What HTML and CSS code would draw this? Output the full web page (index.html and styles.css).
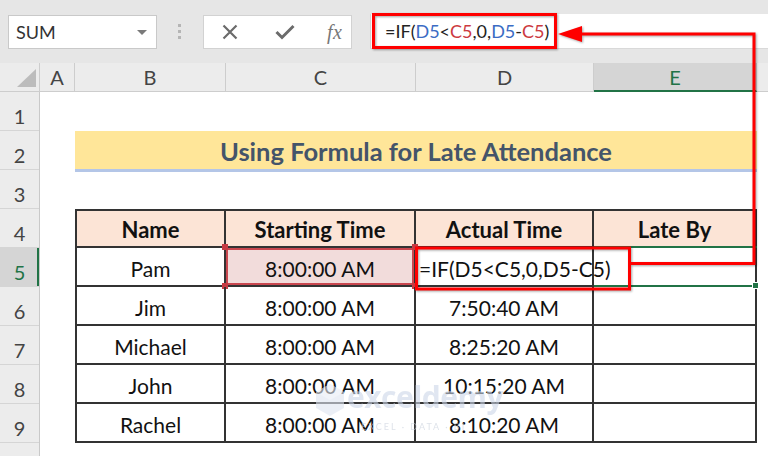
FILE: index.html
```html
<!DOCTYPE html>
<html>
<head>
<meta charset="utf-8">
<link rel="stylesheet" href="styles.css">
</head>
<body>
<div class="app">
  <div class="toolbar">
    <div class="namebox"><span>SUM</span><span class="caret"></span></div>
    <div class="grip"><i></i><i></i><i></i></div>
    <div class="fbtns">
      <svg class="ic" width="16" height="16" viewBox="0 0 16 16"><path d="M1.5 1.5 L14.5 14.5 M14.5 1.5 L1.5 14.5" stroke="#6b6b6b" stroke-width="2.2" fill="none"/></svg>
      <svg class="ic" width="20" height="16" viewBox="0 0 20 16"><path d="M1.5 8 L7 13.5 L18.5 2" stroke="#6b6b6b" stroke-width="3" fill="none"/></svg>
      <span class="fx">fx</span>
    </div>
    <div class="formula">=IF(<span class="r1">D5</span>&lt;<span class="r2">C5</span>,0,<span class="r1">D5</span>-<span class="r2">C5</span>)</div>
  </div>

  <div class="colheads">
    <div class="ch corner"><svg width="22" height="20" viewBox="0 0 22 20"><polygon points="21,1 21,19 2,19" fill="#bcbcbc"/></svg></div>
    <div class="ch ca">A</div>
    <div class="ch cb">B</div>
    <div class="ch cc">C</div>
    <div class="ch cd">D</div>
    <div class="ch ce active">E</div>
    <div class="ch cf"></div>
  </div>

  <div class="sheet">
    <div class="rowheads">
      <div class="rh">1</div>
      <div class="rh">2</div>
      <div class="rh">3</div>
      <div class="rh">4</div>
      <div class="rh active">5</div>
      <div class="rh">6</div>
      <div class="rh">7</div>
      <div class="rh">8</div>
      <div class="rh">9</div>
      <div class="rh"></div>
    </div>
    <div class="cells">
      <div class="blank"></div>
      <div class="titlerow"><div class="title">Using Formula for Late Attendance</div></div>
      <div class="blank"></div>
      <div class="tbl">
        <div class="td th">Name</div>
        <div class="td th">Starting Time</div>
        <div class="td th">Actual Time</div>
        <div class="td th">Late By</div>

        <div class="td">Pam</div>
        <div class="td sel">8:00:00 AM<i class="h h1"></i><i class="h h2"></i><i class="h h3"></i><i class="h h4"></i></div>
        <div class="td edit">=IF(D5&lt;C5,0,D5-C5)</div>
        <div class="td act"><i class="fill"></i></div>

        <div class="td">Jim</div>
        <div class="td">8:00:00 AM</div>
        <div class="td">7:50:40 AM</div>
        <div class="td"></div>

        <div class="td">Michael</div>
        <div class="td">8:00:00 AM</div>
        <div class="td">8:25:20 AM</div>
        <div class="td"></div>

        <div class="td">John</div>
        <div class="td">8:00:00 AM</div>
        <div class="td">10:15:20 AM</div>
        <div class="td"></div>

        <div class="td">Rachel</div>
        <div class="td">8:00:00 AM</div>
        <div class="td">8:10:20 AM</div>
        <div class="td"></div>
      </div>
    </div>
  </div>

  <div class="watermark">
    <svg class="cube" width="30" height="34" viewBox="0 0 30 34"><polygon points="15,1 29,9 29,25 15,33 1,25 1,9" fill="#dfe6f1"/><polygon points="15,1 29,9 15,17 1,9" fill="#e9eef6"/></svg>
    <div class="wm-text">
      <div class="wm-name">exceldemy</div>
      <div class="wm-sub">EXCEL · DATA · BI</div>
    </div>
  </div>

  <svg class="annot" width="768" height="456" viewBox="0 0 768 456">
    <g fill="none" stroke="#ff0000" stroke-width="3">
      <rect x="373.5" y="14.5" width="182" height="33"/>
      <polyline points="580,34 754,34 754,263.5 631,263.5"/>
      <rect x="416.5" y="248" width="213" height="41"/>
    </g>
    <polygon points="558,34 582,26 582,42" fill="#ff0000"/>
  </svg>
</div>
</body>
</html>
```

FILE: styles.css
```css
html, body {
  margin: 0;
  padding: 0;
}
body {
  font-family: Lato, "Liberation Sans", sans-serif;
  background: #ffffff;
}
.app {
  position: relative;
  width: 768px;
  height: 456px;
  overflow: hidden;
}

/* formula bar */
.toolbar {
  display: flex;
  align-items: flex-start;
  height: 63px;
  padding-top: 14px;
  box-sizing: border-box;
  background: #e6e6e6;
}
.namebox {
  margin-left: 8px;
  margin-top: 1px;
  width: 149px;
  height: 34px;
  box-sizing: border-box;
  background: #fff;
  border: 1px solid #c9c9c9;
  display: flex;
  align-items: center;
  justify-content: space-between;
  padding: 0 9px 0 7px;
  font-size: 18px;
  color: #333;
}
.caret {
  width: 0;
  height: 0;
  border-left: 5px solid transparent;
  border-right: 5px solid transparent;
  border-top: 5px solid #7a7a7a;
}
.grip {
  margin-left: 21px;
  margin-right: 21px;
  margin-top: 10px;
  width: 4px;
  display: flex;
  flex-direction: column;
  gap: 3px;
}
.grip i {
  display: block;
  width: 3px;
  height: 3px;
  background: #b5b5b5;
}
.fbtns {
  margin-top: 1px;
  width: 149px;
  height: 34px;
  box-sizing: border-box;
  background: #fff;
  border: 1px solid #d2d2d2;
  display: flex;
  align-items: center;
  padding-left: 18px;
}
.fbtns .ic {
  display: block;
}
.fbtns .ic:nth-child(1) {
  margin-right: 37px;
}
.fbtns .ic:nth-child(2) {
  margin-right: 32px;
}
.fx {
  font-family: "Liberation Serif", serif;
  font-style: italic;
  font-size: 20px;
  color: #777;
  letter-spacing: 0.5px;
}
.formula {
  margin-left: 18px;
  flex: 1;
  height: 34px;
  background: #fff;
  border-left: 1px solid #d2d2d2;
  border-bottom: 1px solid #d9d9d9;
  padding-left: 14px;
  font-size: 18px;
  line-height: 35px;
  color: #222;
  white-space: nowrap;
}
.r1 { color: #3b6cc4; }
.r2 { color: #cc3a3f; }

/* column headers */
.colheads {
  display: flex;
  height: 29px;
  background: #ececec;
  border-bottom: 1px solid #cdcdcd;
  box-sizing: border-box;
}
.ch {
  box-sizing: border-box;
  border-right: 1px solid #cdcdcd;
  display: flex;
  align-items: center;
  justify-content: center;
  font-size: 20px;
  color: #444;
}
.corner { width: 40px; align-items: flex-end; justify-content: flex-end; padding: 0 2px 3px 0; }
.corner svg { display: block; }
.ca { width: 35px; }
.cb { width: 151px; }
.cc { width: 190px; }
.cd { width: 178px; }
.ce { width: 163px; }
.cf { flex: 1; border-right: none; }
.ch.active {
  background: #d5d5d5;
  color: #217346;
  border-bottom: 2px solid #217346;
  margin-bottom: -1px;
}

/* sheet body */
.sheet {
  display: flex;
}
.rowheads {
  width: 40px;
  background: #ececec;
  border-right: 1px solid #c9c9c9;
  box-sizing: border-box;
}
.rh {
  height: 39px;
  box-sizing: border-box;
  border-bottom: 1px solid #d5d5d5;
  display: flex;
  align-items: center;
  justify-content: center;
  padding-top: 10px;
  font-size: 20px;
  color: #444;
}
.rh.active {
  background: #d5d5d5;
  color: #217346;
  box-shadow: inset -2px 0 #217346;
}
.cells {
  flex: 1;
  background: #fff;
}
.blank {
  height: 39px;
}
.titlerow {
  height: 39px;
  padding-left: 35px;
}
.title {
  width: 682px;
  height: 38px;
  background: #ffe699;
  border-bottom: 3px solid #b4c6e7;
  font-size: 25.5px;
  font-weight: 700;
  color: #44546a;
  text-align: center;
  line-height: 40px;
}

/* data table */
.tbl {
  margin-left: 35px;
  width: 682px;
  box-sizing: border-box;
  display: grid;
  grid-template-columns: 149px 190px 178px 163px;
  border-top: 2px solid #333;
  border-left: 2px solid #333;
}
.td {
  position: relative;
  height: 39px;
  box-sizing: border-box;
  border-right: 2px solid #333;
  border-bottom: 2px solid #333;
  display: flex;
  align-items: center;
  justify-content: center;
  padding-top: 3px;
  font-size: 21px;
  color: #111;
  white-space: nowrap;
}
.th {
  height: 37px;
  padding-top: 1px;
  background: #fce4d6;
  font-weight: 700;
  font-size: 22px;
}
.sel {
  background: #f2dcdb;
  box-shadow: inset 0 0 0 2px #c9474f;
}
.h {
  position: absolute;
  width: 6px;
  height: 6px;
  background: #c63b43;
}
.h1 { left: -4px; top: -4px; }
.h2 { right: -4px; top: -4px; }
.h3 { left: -4px; bottom: -4px; }
.h4 { right: -4px; bottom: -4px; }
.edit {
  justify-content: flex-start;
  padding-left: 3px;
  overflow: visible;
  z-index: 1;
  color: #111;
}
.act::before,
.act::after {
  content: "";
  position: absolute;
  left: 0;
  right: -2px;
  height: 2px;
  background: #217346;
}
.act::before { top: -2px; }
.act::after { bottom: -2px; }
.fill {
  position: absolute;
  right: -4px;
  bottom: -4px;
  width: 5px;
  height: 5px;
  background: #217346;
  border: 1px solid #fff;
  z-index: 2;
}

/* watermark */
.watermark {
  position: absolute;
  left: 315px;
  top: 381px;
  display: flex;
  align-items: flex-start;
  gap: 2px;
  opacity: 0.6;
}
.cube { display: block; margin-top: 2px; }
.wm-name {
  font-family: "Open Sans", sans-serif;
  font-size: 30px;
  font-weight: 700;
  color: #cdd7e8;
  line-height: 32px;
  letter-spacing: -0.5px;
}
.wm-sub {
  font-size: 9px;
  letter-spacing: 2px;
  color: #c8d0dc;
  margin-top: 8px;
  margin-left: 14px;
}

/* annotation overlay */
.annot {
  position: absolute;
  left: 0;
  top: 0;
  pointer-events: none;
  filter: drop-shadow(1px 1px 1px rgba(0, 0, 0, 0.35));
  z-index: 5;
}
```
